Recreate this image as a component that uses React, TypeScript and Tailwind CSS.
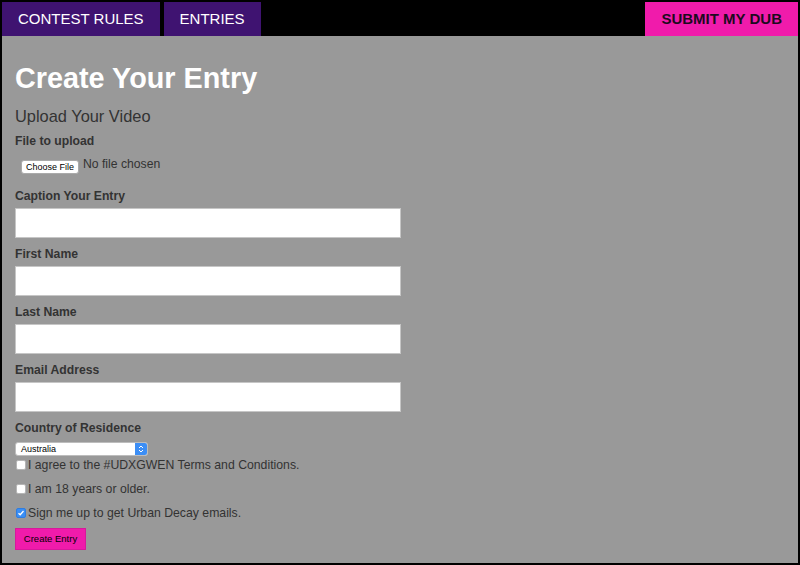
import React from "react";

function Field({ label, first }: { label: string; first?: boolean }) {
  return (
    <div className={first ? "mt-[14px]" : "mt-[8px]"}>
      <div className="text-[12.2px] leading-[16px] font-bold text-[#333]">{label}</div>
      <div className="mt-[4px] h-[30px] w-[386px] bg-white border border-[#c6c6c6]" />
    </div>
  );
}

function Check({ checked, label }: { checked?: boolean; label: string }) {
  return (
    <div className="flex items-center h-[16px] gap-[2px]">
      {checked ? (
        <span className="ml-[1px] w-[10px] h-[10px] rounded-[2px] bg-[#3a8ef4] border border-[#2f7de0] flex items-center justify-center">
          <svg width="8" height="8" viewBox="0 0 8 8">
            <path d="M1.5 4.2 L3.2 5.8 L6.5 2" stroke="white" strokeWidth="1.3" fill="none" />
          </svg>
        </span>
      ) : (
        <span className="ml-[1px] w-[10px] h-[10px] rounded-[2px] bg-white border border-[#b5b5b5]" />
      )}
      <span className="text-[12.25px] leading-[16px] text-[#333]">{label}</span>
    </div>
  );
}

export default function App() {
  return (
    <div className="w-[800px] h-[565px] bg-black flex flex-col font-['Liberation_Sans',Arial,Helvetica,sans-serif]">
      <nav className="h-[36px] flex pt-[2px] px-[2px] gap-[4px]">
        <a className="h-[34px] px-[16px] flex items-center bg-[#3f1371] text-white text-[15px]">CONTEST RULES</a>
        <a className="h-[34px] px-[16px] flex items-center bg-[#3f1371] text-white text-[15px]">ENTRIES</a>
        <div className="flex-1" />
        <a className="h-[34px] px-[16px] flex items-center bg-[#f01bab] text-[#1c0a20] text-[15px] font-bold">SUBMIT MY DUB</a>
      </nav>
      <main className="flex-1 bg-[#999999] mx-[2px] mb-[2px] pl-[13px] pt-[26px]">
        <h1 className="text-[28.8px] leading-[32px] font-bold text-white">Create Your Entry</h1>
        <h2 className="mt-[12px] text-[16.4px] leading-[20px] text-[#333]">Upload Your Video</h2>
        <div className="mt-[7px] text-[12.2px] leading-[16px] font-bold text-[#333]">File to upload</div>
        <div className="mt-[11px] flex items-start h-[14px]">
          <span className="ml-[6px] h-[14px] w-[58px] bg-white border border-[#aaa] rounded-[3px] flex items-center justify-center text-[9px] leading-[12px] text-black">
            Choose File
          </span>
          <span className="ml-[4px] mt-[-3px] text-[12.2px] leading-[14px] text-[#333]">No file chosen</span>
        </div>
        <Field first label="Caption Your Entry" />
        <Field label="First Name" />
        <Field label="Last Name" />
        <Field label="Email Address" />
        <div className="mt-[8px] text-[12.2px] leading-[16px] font-bold text-[#333]">Country of Residence</div>
        <div className="mt-[6px] w-[133px] h-[14px] bg-white rounded-[3px] border border-[#bdbdbd] flex items-center overflow-hidden">
          <span className="flex-1 pl-[5px] text-[9px] leading-[12px] text-black">Australia</span>
          <span className="w-[12px] h-full bg-[#3c8ef5] flex items-center justify-center">
            <svg width="6" height="10" viewBox="0 0 6 10">
              <path d="M1 4 L3 2 L5 4" stroke="white" strokeWidth="1" fill="none" />
              <path d="M1 6 L3 8 L5 6" stroke="white" strokeWidth="1" fill="none" />
            </svg>
          </span>
        </div>
        <div className="mt-[1px] flex flex-col gap-[8px]">
          <Check label="I agree to the #UDXGWEN Terms and Conditions." />
          <Check label="I am 18 years or older." />
          <Check checked label="Sign me up to get Urban Decay emails." />
        </div>
        <div className="mt-[7px] w-[71px] h-[22px] bg-[#f01bab] border border-[#d8189c] flex items-center justify-center text-[9.5px] text-black">
          Create Entry
        </div>
      </main>
    </div>
  );
}
